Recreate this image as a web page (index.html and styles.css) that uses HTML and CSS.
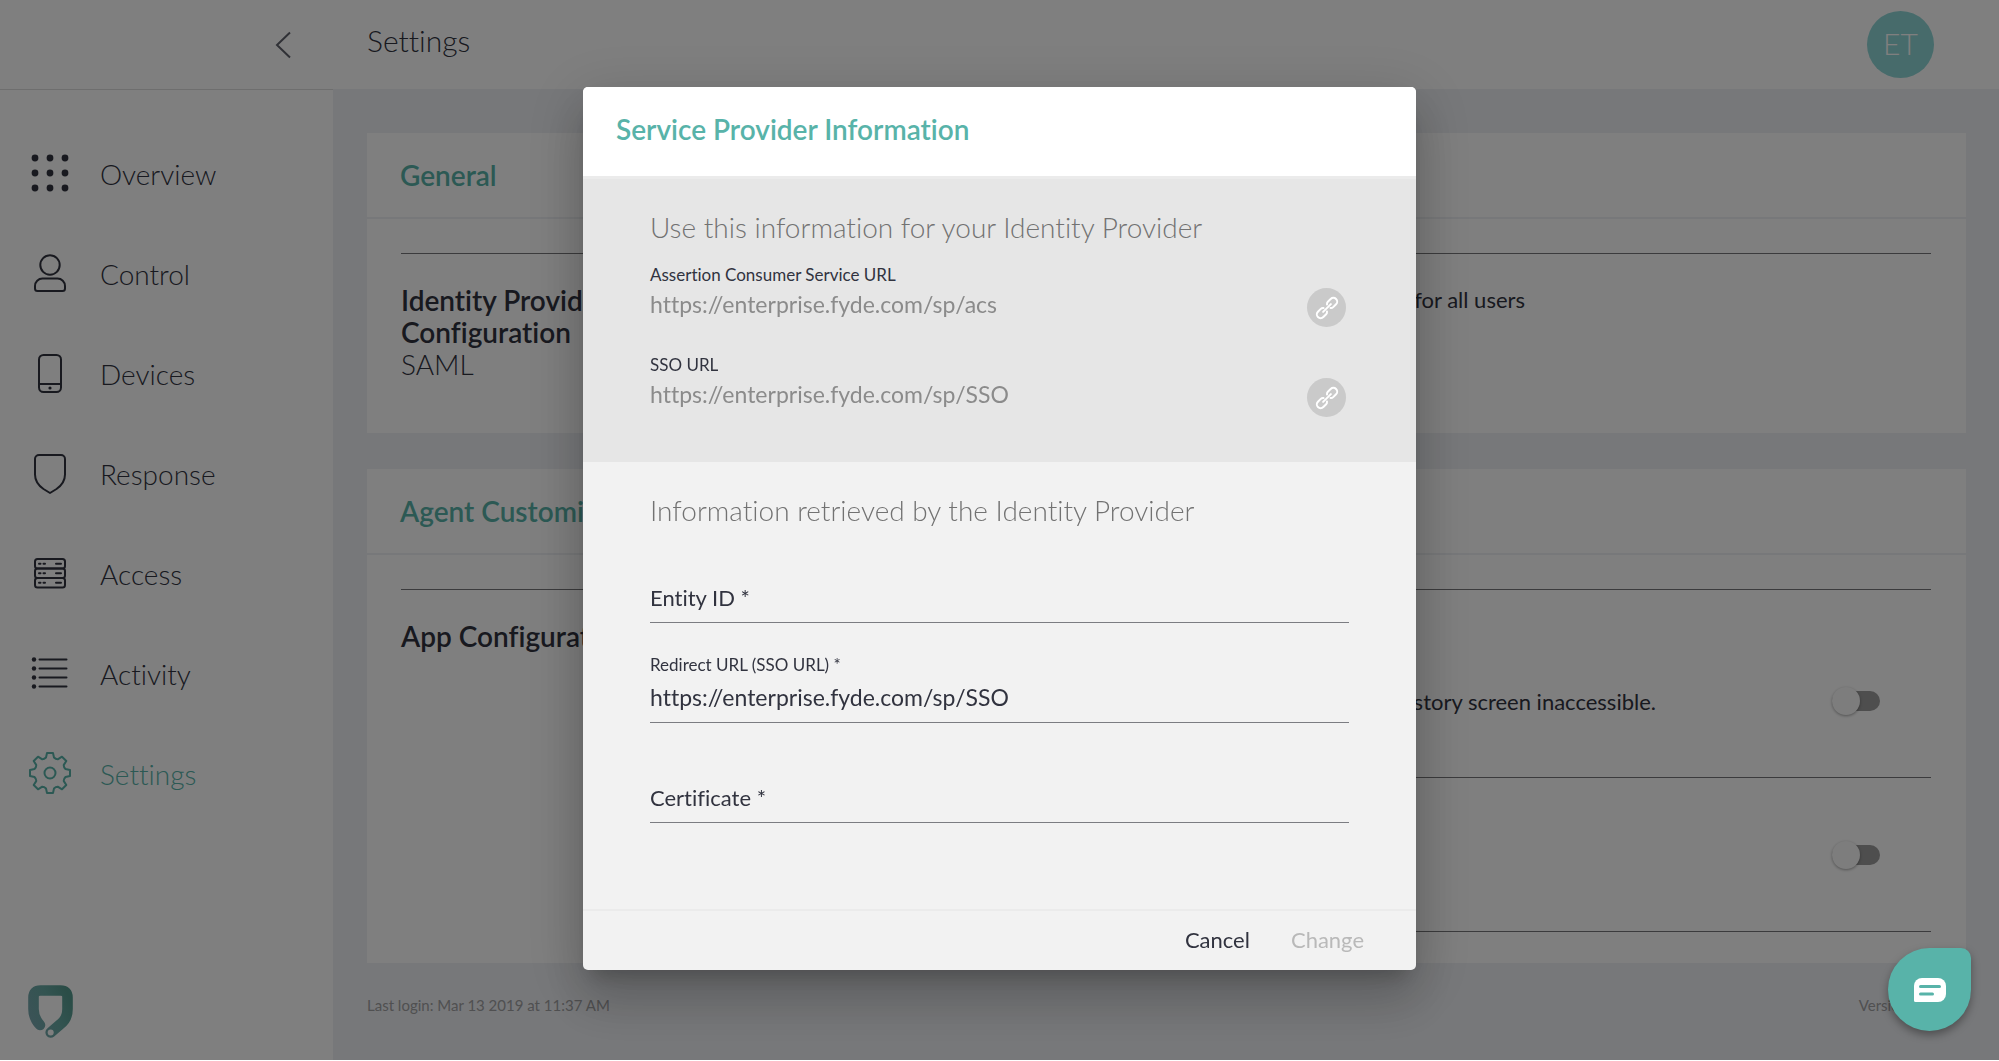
FILE: index.html
```html
<!DOCTYPE html>
<html lang="en">
<head>
  <meta charset="utf-8">
  <meta name="viewport" content="width=device-width, initial-scale=1">
  <title>Settings</title>
  <link rel="stylesheet" href="styles.css">
</head>
<body>
  <div class="app">
    <aside class="sidebar">
      <div class="sidebar-top">
        <button class="collapse" type="button" aria-label="Collapse menu">
          <svg width="16" height="28" viewBox="0 0 16 28"><path d="M15 1.500L2 14l13 12.500"/></svg>
        </button>
      </div>
      <nav class="nav">
        <a class="nav-item" href="#overview">
          <svg class="nav-icon nav-icon-solid" viewBox="0 0 44 44">
            <circle cx="7" cy="6" r="3.400"/><circle cx="22" cy="6" r="3.400"/><circle cx="37" cy="6" r="3.400"/>
            <circle cx="7" cy="21" r="3.400"/><circle cx="22" cy="21" r="3.400"/><circle cx="37" cy="21" r="3.400"/>
            <circle cx="7" cy="36" r="3.400"/><circle cx="22" cy="36" r="3.400"/><circle cx="37" cy="36" r="3.400"/>
          </svg>
          Overview
        </a>
        <a class="nav-item" href="#control">
          <svg class="nav-icon" viewBox="0 0 44 44">
            <circle cx="22" cy="13" r="9.700"/>
            <path d="M7 36.500v-2.500a7.500 7.500 0 0 1 7.500-7.500h15a7.500 7.500 0 0 1 7.500 7.500v2.500a2.500 2.500 0 0 1-2.500 2.500h-25a2.500 2.500 0 0 1-2.500-2.500z"/>
          </svg>
          Control
        </a>
        <a class="nav-item" href="#devices">
          <svg class="nav-icon" viewBox="0 0 44 44">
            <rect x="11" y="3" width="22" height="37" rx="4.500"/><path d="M11 32h22"/><circle class="dot" cx="22" cy="36" r="1.600"/>
          </svg>
          Devices
        </a>
        <a class="nav-item" href="#response">
          <svg class="nav-icon" viewBox="0 0 44 44">
            <path d="M11 3h22a4 4 0 0 1 4 4v15.500c0 6-3.500 11-8.500 14.500l-6.500 4-6.500-4c-5-3.500-8.500-8.500-8.500-14.500V7a4 4 0 0 1 4-4z"/>
          </svg>
          Response
        </a>
        <a class="nav-item" href="#access">
          <svg class="nav-icon" viewBox="0 0 44 44">
            <rect x="7" y="7" width="30" height="9.500" rx="2.500"/><rect x="7" y="16.500" width="30" height="9.500" rx="2.500"/><rect x="7" y="26" width="30" height="9.500" rx="2.500"/>
            <path d="M11 11.800h1.500M15.500 11.800h1.500M28 11.800h5M11 21.200h1.500M15.500 21.200h1.500M28 21.200h5M11 30.700h1.500M15.500 30.700h1.500M28 30.700h5"/>
          </svg>
          Access
        </a>
        <a class="nav-item" href="#activity">
          <svg class="nav-icon" viewBox="0 0 44 44">
            <path d="M11.500 7.500h27M11.500 16.500h27M11.500 25.500h27M11.500 34.500h27"/>
            <circle class="dot" cx="6" cy="7.500" r="2.200"/><circle class="dot" cx="6" cy="16.500" r="2.200"/><circle class="dot" cx="6" cy="25.500" r="2.200"/><circle class="dot" cx="6" cy="34.500" r="2.200"/>
          </svg>
          Activity
        </a>
        <a class="nav-item nav-item-active" href="#settings" aria-current="page">
          <svg class="nav-icon" viewBox="-22 -21 44 44">
            <path d="M-3-20H3L4-15.500Q6-13.500 8.100-13.800L12-16.300L16.300-12L13.800-8.100Q13.500-6 15.500-4L20-3V3L15.500 4Q13.500 6 13.800 8.100L16.300 12L12 16.300L8.100 13.800Q6 13.500 4 15.500L3 20H-3L-4 15.500Q-6 13.500-8.100 13.800L-12 16.300L-16.300 12L-13.800 8.100Q-13.500 6-15.500 4L-20 3V-3L-15.500-4Q-13.500-6-13.800-8.100L-16.300-12L-12-16.300L-8.100-13.800Q-6-13.500-4-15.500Z"/>
            <circle r="5.500"/>
          </svg>
          Settings
        </a>
      </nav>
      <svg class="logo" width="45" height="54" viewBox="0 0 45 54">
        <defs>
          <linearGradient id="shield" x1="0" y1="40" x2="45" y2="20" gradientUnits="userSpaceOnUse">
            <stop offset="0" stop-color="#7aa7b0"/><stop offset="0.600" stop-color="#66a8a2"/><stop offset="1" stop-color="#559a8e"/>
          </linearGradient>
        </defs>
        <path d="M12 40Q5.500 33 5.500 24V12.500Q5.500 5.500 12.500 5.500H32.500Q39.500 5.500 39.500 12.500V24Q39.500 34 32 39.500L22.700 47.500" fill="none" stroke="url(#shield)" stroke-width="10.600" stroke-linecap="round"/>
        <circle cx="22.700" cy="47.500" r="3" fill="#fff"/>
      </svg>
    </aside>

    <div class="page">
      <header class="topbar">
        <h1 class="page-title">Settings</h1>
        <button class="avatar" type="button">ET</button>
      </header>
      <main class="content">
        <section class="card">
          <h2 class="card-title">General</h2>
          <div class="card-row">
            <div class="card-label"><b>Identity Provider Configuration</b><br>SAML</div>
            <p class="description">for all users</p>
          </div>
        </section>
        <section class="card">
          <h2 class="card-title">Agent Customization</h2>
          <div class="card-row card-row-options">
            <div class="card-label"><b>App Configuration</b></div>
            <div class="options">
              <div class="option">
                <label for="history">history screen inaccessible.</label>
                <input class="toggle" id="history" type="checkbox">
              </div>
              <div class="option">
                <input class="toggle" type="checkbox" aria-label="App option">
              </div>
            </div>
          </div>
        </section>
      </main>
      <footer class="footer"><span>Last login: Mar 13 2019 at 11:37 AM</span><span>Version 0.10.0.1</span></footer>
    </div>
  </div>

  <div class="overlay">
    <section class="modal" role="dialog" aria-labelledby="modal-title">
      <h2 class="modal-title" id="modal-title">Service Provider Information</h2>
      <div class="provider">
        <h3 class="section-title">Use this information for your Identity Provider</h3>
        <div class="copy-field">
          <label class="small-label" for="acs">Assertion Consumer Service URL</label>
          <div class="copy-row">
            <input class="url" id="acs" value="https://enterprise.fyde.com/sp/acs" readonly>
            <button class="copy" type="button" aria-label="Copy Assertion Consumer Service URL">
              <svg width="28" height="28" viewBox="-14 -14 28 28"><path transform="rotate(-45)" d="M-2.500 2.500Q-3.500 3.800-5 3.800H-9a3.800 3.800 0 0 1 0-7.600h4Q-3.500-3.800-2.500-2.500M2.500-2.500Q3.500-3.800 5-3.800H9a3.800 3.800 0 0 1 0 7.600H5Q3.500 3.800 2.500 2.500M-5.500 0H5.500"/></svg>
            </button>
          </div>
        </div>
        <div class="copy-field">
          <label class="small-label" for="sso">SSO URL</label>
          <div class="copy-row">
            <input class="url" id="sso" value="https://enterprise.fyde.com/sp/SSO" readonly>
            <button class="copy" type="button" aria-label="Copy SSO URL">
              <svg width="28" height="28" viewBox="-14 -14 28 28"><path transform="rotate(-45)" d="M-2.500 2.500Q-3.500 3.800-5 3.800H-9a3.800 3.800 0 0 1 0-7.600h4Q-3.500-3.800-2.500-2.500M2.500-2.500Q3.500-3.800 5-3.800H9a3.800 3.800 0 0 1 0 7.600H5Q3.500 3.800 2.500 2.500M-5.500 0H5.500"/></svg>
            </button>
          </div>
        </div>
      </div>
      <form class="form">
        <div class="form-body">
          <h3 class="section-title">Information retrieved by the Identity Provider</h3>
          <div class="field field-empty">
            <label for="entity">Entity ID *</label>
            <input id="entity" type="text">
          </div>
          <div class="field">
            <label class="small-label" for="redirect">Redirect URL (SSO URL) *</label>
            <input id="redirect" type="text" value="https://enterprise.fyde.com/sp/SSO">
          </div>
          <div class="field field-empty">
            <label for="certificate">Certificate *</label>
            <input id="certificate" type="text">
          </div>
        </div>
        <div class="actions">
          <button class="action" type="button">Cancel</button>
          <button class="action" type="submit" disabled>Change</button>
        </div>
      </form>
    </section>
  </div>

  <button class="chat" type="button" aria-label="Open chat">
    <svg width="32" height="24" viewBox="0 0 32 24">
      <path d="M8 0h16a8 8 0 0 1 8 8v8a8 8 0 0 1-8 8H1.500A1.500 1.500 0 0 1 0 22.500V8a8 8 0 0 1 8-8z" fill="#fff"/>
      <path d="M6.500 8.500h19M6.500 16h12" stroke="#58b3a9" stroke-width="3" stroke-linecap="round"/>
    </svg>
  </button>
</body>
</html>
```
FILE: styles.css
```css
:root {
  --ink: #31333f;
  --teal: #58b3a9;
  --page: #eff1f5;
}

* { box-sizing: border-box; }

html { background: #fff; }

body {
  margin: 0;
  color: var(--ink);
  font-family: "Lato", "Open Sans", sans-serif;
  font-size: 22px;
  font-weight: 400;
  line-height: 32px;
  font-variant-ligatures: none;
}

h1, h2, h3, p { margin: 0; }

button, input {
  margin: 0;
  padding: 0;
  border: 0;
  background: none;
  color: inherit;
  font: inherit;
  font-variant-ligatures: none;
}

svg { display: block; fill: none; }

/* App shell */
.app {
  display: flex;
  min-height: calc(100vh - 1px);
  background: var(--page);
}

.sidebar {
  display: flex;
  flex-direction: column;
  flex: none;
  width: 333px;
  padding-bottom: 21px;
  background: #fff;
}

.sidebar-top {
  display: flex;
  align-items: center;
  justify-content: flex-end;
  height: 90px;
  padding-right: 42px;
  border-bottom: 1px solid #dcdcdc;
}

.collapse svg { stroke: #60626c; stroke-width: 2; }

.nav { padding-top: 34px; }

.nav-item {
  display: flex;
  align-items: center;
  gap: 28px;
  height: 100px;
  padding-left: 28px;
  color: inherit;
  font-size: 28px;
  font-weight: 300;
  text-decoration: none;
}

.nav-icon {
  width: 44px;
  height: 44px;
  stroke: currentColor;
  stroke-width: 2;
  stroke-linecap: round;
  stroke-linejoin: round;
}

.nav-icon-solid, .nav-icon .dot { fill: currentColor; stroke: none; }

.nav-item-active { color: var(--teal); }

.logo { margin: auto 0 0 28px; }

.page { flex: 1; min-width: 0; }

.topbar {
  display: flex;
  align-items: center;
  justify-content: space-between;
  height: 89px;
  padding: 0 65px 0 34px;
  background: #fff;
}

.page-title {
  padding-bottom: 10px;
  font-size: 30px;
  font-weight: 300;
}

.avatar {
  width: 67px;
  height: 67px;
  padding-bottom: 3px;
  border-radius: 50%;
  background: #8fd6d6;
  color: #fff;
  font-size: 30px;
  font-weight: 300;
}

/* Settings cards */
.content {
  display: grid;
  gap: 36px;
  padding: 44px 33px 0 34px;
}

.card { background: #fff; }

.card-title {
  padding: 26px 33px;
  border-bottom: 2px solid #eff1f4;
  color: var(--teal);
  font-size: 28px;
  font-weight: 600;
}

.card-row {
  display: flex;
  margin: 34px 35px 0 34px;
  padding: 30px 0 53px;
  border-top: 1px solid #77777a;
}

.card-label {
  flex: none;
  width: 300px;
  font-size: 28px;
  font-weight: 300;
}

.card-label b { font-weight: 600; }

.description {
  flex: 1;
  padding-right: 406px;
  text-align: right;
}

.card-row-options { padding-bottom: 31px; }

.options { flex: 1; padding-top: 4px; }

.option {
  display: flex;
  align-items: center;
  justify-content: flex-end;
  gap: 176px;
  height: 154px;
  padding-right: 51px;
  border-bottom: 1px solid #77777a;
}

.option label { padding-top: 2px; }

.toggle {
  appearance: none;
  position: relative;
  width: 48px;
  height: 28px;
}

.toggle::before, .toggle::after {
  content: "";
  position: absolute;
  left: 0;
}

.toggle::before {
  top: 4px;
  width: 48px;
  height: 20px;
  border-radius: 10px;
  background: #9c9c9c;
}

.toggle::after {
  top: 0;
  width: 28px;
  height: 28px;
  border-radius: 50%;
  background: #fafafa;
  box-shadow: 0 1px 3px rgba(0, 0, 0, 0.35);
}

.footer {
  display: flex;
  justify-content: space-between;
  padding: 32px 33px 44px 34px;
  color: #a0a0a2;
  font-size: 15px;
  line-height: 20px;
}

/* Modal */
.overlay {
  position: fixed;
  inset: 0 0 1px;
  display: flex;
  align-items: flex-start;
  justify-content: center;
  padding-top: 87px;
  background: rgba(0, 0, 0, 0.5);
}

.modal {
  overflow: hidden;
  width: 833px;
  border-radius: 5px;
  background: #f2f2f2;
  box-shadow: 0 14px 19px -9px rgba(0, 0, 0, 0.2), 0 30px 48px 4px rgba(0, 0, 0, 0.14), 0 12px 58px 10px rgba(0, 0, 0, 0.12);
}

.modal-title {
  padding: 26px 33px 31px;
  border-bottom: 3px solid #ebebeb;
  background: #fff;
  color: var(--teal);
  font-size: 28px;
  font-weight: 600;
}

.provider {
  display: grid;
  gap: 28px;
  padding: 32px 67px 45px;
  background: #e6e6e6;
}

.section-title {
  color: #727272;
  font-size: 28px;
  font-weight: 300;
}

.provider .section-title { margin-bottom: -6px; }

.copy-field { display: grid; gap: 3px; }

.small-label {
  font-size: 17px;
  line-height: 20px;
}

.copy-row {
  display: flex;
  align-items: flex-start;
  gap: 24px;
  padding-right: 3px;
}

.url {
  flex: 1;
  height: 32px;
  color: #8b8b8b;
  font-size: 23px;
}

.copy {
  display: grid;
  place-items: center;
  width: 39px;
  height: 39px;
  border-radius: 50%;
  background: #cacaca;
}

.copy svg { stroke: #fff; stroke-width: 2; stroke-linecap: round; }

.form-body {
  display: grid;
  gap: 32px;
  padding: 32px 67px 86px;
}

.form-body .section-title { margin-bottom: -3px; }

.field {
  display: grid;
  grid-template-rows: 20px 43px;
  gap: 5px;
}

.field input {
  grid-area: 2 / 1;
  padding-bottom: 8px;
  border-bottom: 1px solid #7c7d82;
  font-size: 23px;
}

.field-empty label {
  grid-area: 2 / 1;
  line-height: 36px;
}

.actions {
  display: flex;
  justify-content: flex-end;
  gap: 41px;
  padding: 15px 52px 16px;
  border-top: 2px solid #ebebeb;
}

.action { line-height: 28px; }

.action:disabled { color: #b9b9b9; }

/* Chat launcher */
.chat {
  position: fixed;
  right: 28px;
  bottom: 30px;
  display: grid;
  place-items: center;
  width: 83px;
  height: 83px;
  border-radius: 50% 10px 50% 50%;
  background: var(--teal);
  box-shadow: 0 4px 8px rgba(0, 0, 0, 0.35);
}
```
